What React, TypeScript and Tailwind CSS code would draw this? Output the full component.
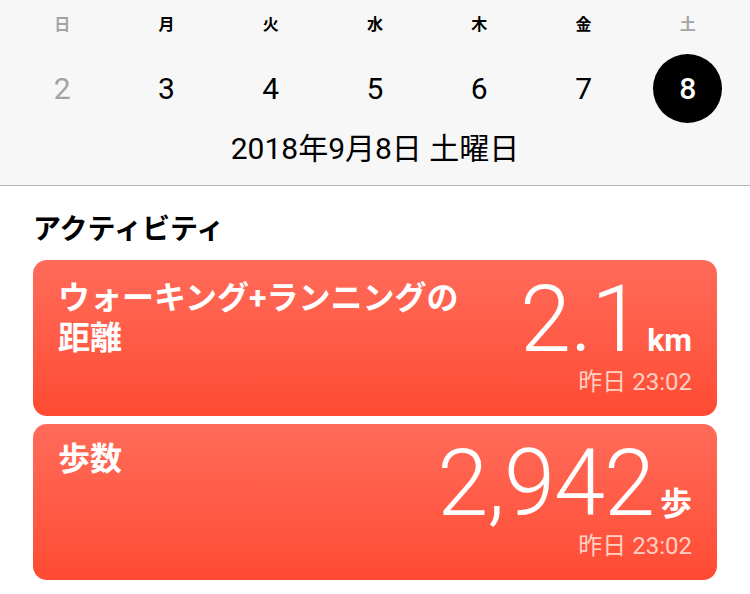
import React from 'react';

const jp = "font-['Roboto','Noto_Sans_CJK_JP',sans-serif]";

const days = [
  { label: '日', num: 2, muted: true },
  { label: '月', num: 3 },
  { label: '火', num: 4 },
  { label: '水', num: 5 },
  { label: '木', num: 6 },
  { label: '金', num: 7 },
  { label: '土', num: 8, muted: true, selected: true },
];

type CardProps = {
  title: React.ReactNode;
  value: string;
  unit: string;
  time: string;
  titleTop: string;
};

function ActivityCard({ title, value, unit, time, titleTop }: CardProps) {
  return (
    <div className="flex h-[156px] rounded-[14px] bg-gradient-to-b from-[#ff6b59] to-[#ff4a32] px-[25px] text-white">
      <div className={`flex-1 ${titleTop} text-[32px] font-bold leading-[40px]`}>{title}</div>
      <div className="flex flex-col items-end pt-[20px]">
        <div className="flex items-baseline">
          <span className="font-['Roboto',sans-serif] text-[92px] font-light leading-[80px] tracking-[-1px]">{value}</span>
          <span className="ml-[6px] text-[32px] font-bold leading-[40px]">{unit}</span>
        </div>
        <div className="mt-[8px] text-[24px] leading-[28px] text-[#ffcfc3]">{time}</div>
      </div>
    </div>
  );
}

export default function App() {
  return (
    <div className={`h-[594px] w-[750px] overflow-hidden bg-white ${jp}`}>
      <div className="border-b border-[#b4b4b4] bg-[#f7f7f7] px-[10px] pb-[15px]">
        <div className="grid grid-cols-7">
          {days.map((d) => (
            <div key={d.label} className="flex flex-col items-center">
              <div
                className={`flex h-[50px] items-center text-[16px] font-bold ${
                  d.muted ? 'text-[#a3a3a3]' : 'text-black'
                }`}
              >
                {d.label}
              </div>
              <div className="flex h-[76px] items-center">
                {d.selected ? (
                  <div className="flex h-[69px] w-[69px] items-center justify-center rounded-full bg-black text-[30px] font-medium text-white">
                    {d.num}
                  </div>
                ) : (
                  <span className={`text-[30px] ${d.muted ? 'text-[#a3a3a3]' : 'text-black'}`}>{d.num}</span>
                )}
              </div>
            </div>
          ))}
        </div>
        <div className="flex h-[44px] items-center justify-center text-[30px] text-black">
          2018年9月8日 土曜日
        </div>
      </div>

      <div className="px-[33px]">
        <h2 className="flex h-[66px] items-end pb-[4px] text-[28px] font-bold leading-[36px] text-black">
          アクティビティ
        </h2>
        <div className="mt-[8px] flex flex-col gap-[8px]">
          <ActivityCard
            title={
              <>
                ウォーキング+ランニングの
                <br />
                距離
              </>
            }
            value="2.1"
            unit="km"
            time="昨日 23:02"
            titleTop="pt-[18px]"
          />
          <ActivityCard title="歩数" value="2,942" unit="歩" time="昨日 23:02" titleTop="pt-[15px]" />
        </div>
      </div>
    </div>
  );
}
